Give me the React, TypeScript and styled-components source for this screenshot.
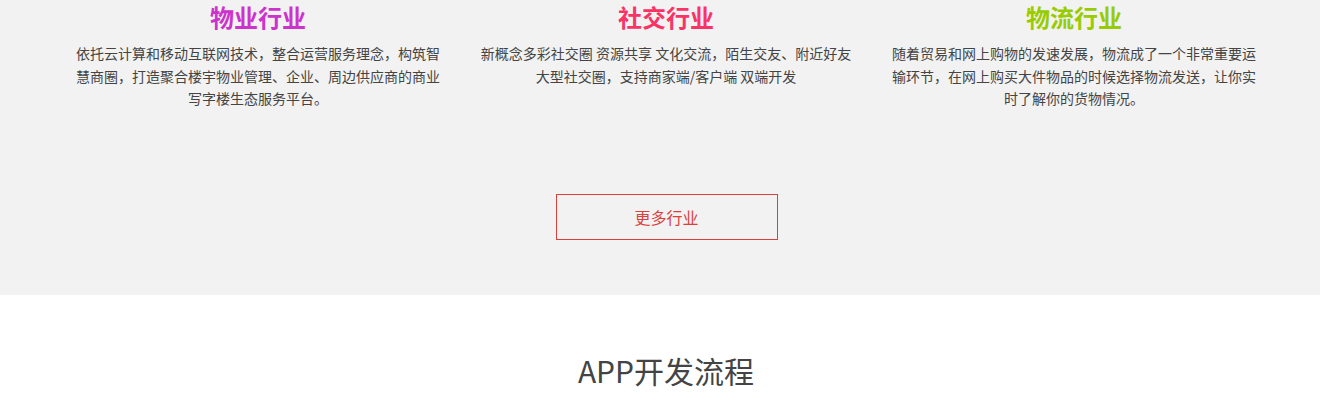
import styled, { createGlobalStyle } from 'styled-components'

const GlobalStyle = createGlobalStyle`
  html, body {
    margin: 0;
    padding: 0;
    background: #fff;
    font-family: "Noto Sans CJK SC", "Noto Sans", sans-serif;
  }
`

const GraySection = styled.section`
  background: #f2f2f2;
  padding: 2px 0 55px;
`

const Columns = styled.div`
  display: grid;
  grid-template-columns: repeat(3, 408px);
  justify-content: center;
  padding-left: 12px;
`

const Column = styled.div`
  padding: 0 16px;
  text-align: center;
`

const Title = styled.h3<{ $color: string }>`
  margin: 0 0 10px;
  font-size: 24px;
  line-height: 30px;
  font-weight: 700;
  color: ${p => p.$color};
`

const Desc = styled.p`
  margin: 0;
  font-size: 14px;
  line-height: 22.5px;
  color: #444;
`

const ButtonRow = styled.div`
  display: flex;
  justify-content: center;
  margin-top: 84px;
  padding-left: 13px;
`

const MoreButton = styled.a`
  display: flex;
  align-items: center;
  justify-content: center;
  width: 220px;
  height: 44px;
  border: 1px solid #d9413c;
  color: #d9413c;
  font-size: 16px;
  text-decoration: none;
  cursor: pointer;
`

const WhiteSection = styled.section`
  background: #fff;
  padding: 53px 0 0 12px;
  text-align: center;
`

const Heading = styled.h2`
  margin: 0;
  font-size: 30px;
  line-height: 44px;
  font-weight: 400;
  color: #444;
`

const industries = [
  {
    title: '物业行业',
    color: '#cc33cc',
    desc: '依托云计算和移动互联网技术，整合运营服务理念，构筑智慧商圈，打造聚合楼宇物业管理、企业、周边供应商的商业写字楼生态服务平台。',
  },
  {
    title: '社交行业',
    color: '#fa3366',
    desc: '新概念多彩社交圈 资源共享 文化交流，陌生交友、附近好友大型社交圈，支持商家端/客户端 双端开发',
  },
  {
    title: '物流行业',
    color: '#99cc00',
    desc: '随着贸易和网上购物的发速发展，物流成了一个非常重要运输环节，在网上购买大件物品的时候选择物流发送，让你实时了解你的货物情况。',
  },
]

export default function App() {
  return (
    <>
      <GlobalStyle />
      <GraySection>
        <Columns>
          {industries.map(item => (
            <Column key={item.title}>
              <Title $color={item.color}>{item.title}</Title>
              <Desc>{item.desc}</Desc>
            </Column>
          ))}
        </Columns>
        <ButtonRow>
          <MoreButton>更多行业</MoreButton>
        </ButtonRow>
      </GraySection>
      <WhiteSection>
        <Heading>APP开发流程</Heading>
      </WhiteSection>
    </>
  )
}
